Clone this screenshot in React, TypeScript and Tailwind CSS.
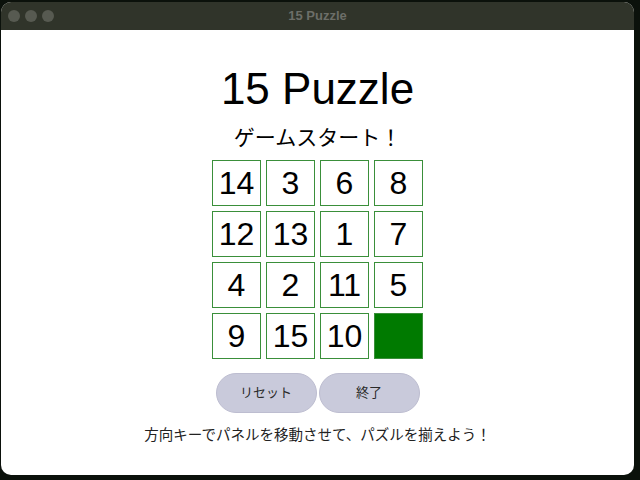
const tiles: (number | null)[] = [14, 3, 6, 8, 12, 13, 1, 7, 4, 2, 11, 5, 9, 15, 10, null]

export default function App() {
  return (
    <div className="w-[640px] h-[480px] bg-[#0b110b] pt-[2px] pl-[1px]">
      <div className="w-[633px] h-[473px] rounded-[10px] overflow-hidden flex flex-col bg-white">
        {/* title bar */}
        <div className="relative h-[28px] bg-[#30342a] flex items-center shrink-0">
          <div className="flex gap-[5px] pl-[7px]">
            <span className="w-[12px] h-[12px] rounded-full bg-[#575a51]" />
            <span className="w-[12px] h-[12px] rounded-full bg-[#575a51]" />
            <span className="w-[12px] h-[12px] rounded-full bg-[#575a51]" />
          </div>
          <div className="absolute inset-0 flex items-center justify-center text-[13px] font-bold text-[#6c6e68] font-['Liberation_Sans',sans-serif]">
            15 Puzzle
          </div>
        </div>

        {/* content */}
        <div className="flex-1 flex flex-col items-center font-['Liberation_Sans','Noto_Sans_CJK_JP',sans-serif] text-black">
          <h1 className="mt-[35px] text-[44px] leading-[48px]">15 Puzzle</h1>
          <p className="mt-[11px] text-[21px] leading-[28px]">ゲームスタート！</p>

          <div className="mt-[8px] grid grid-cols-[repeat(4,49px)] grid-rows-[repeat(4,46px)] gap-x-[5px] gap-y-[5px]">
            {tiles.map((n, i) =>
              n === null ? (
                <div key={i} className="border border-[#3a8f3a] bg-[#007a00]" />
              ) : (
                <div
                  key={i}
                  className="border border-[#3a8f3a] flex items-center justify-center text-[32px] leading-none"
                >
                  {n}
                </div>
              )
            )}
          </div>

          <div className="mt-[14px] flex gap-[2px]">
            <button className="w-[101px] h-[40px] rounded-full bg-[#c9cadb] border border-[#bdbdd0] text-[13px] text-[#2a2a2a]">
              リセット
            </button>
            <button className="w-[101px] h-[40px] rounded-full bg-[#c9cadb] border border-[#bdbdd0] text-[13px] text-[#2a2a2a]">
              終了
            </button>
          </div>

          <p className="mt-[12px] text-[14.5px] leading-[20px] text-[#222]">
            方向キーでパネルを移動させて、パズルを揃えよう！
          </p>
        </div>
      </div>
    </div>
  )
}
